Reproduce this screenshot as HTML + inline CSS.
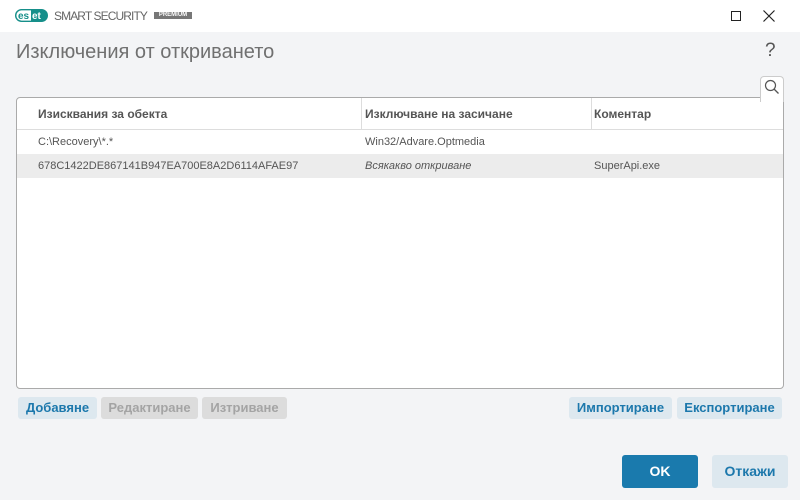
<!DOCTYPE html>
<html><head><meta charset="utf-8"><style>
*{margin:0;padding:0;box-sizing:border-box}
body{width:800px;height:500px;background:#f3f4f6;font-family:"Liberation Sans","DejaVu Sans",sans-serif;position:relative;overflow:hidden;color:#333}
.tb{position:absolute;left:0;top:0;width:800px;height:32px;background:#fff}
.abs{position:absolute}
.h1{left:16px;top:41px;font-size:20px;color:#707070;font-weight:normal;letter-spacing:0px}
.tbl{left:16px;top:97px;width:768px;height:292px;background:#fff;border:1px solid #aaa;border-radius:4px}
.hdr{position:absolute;top:0;left:0;right:0;height:32px;border-bottom:1px solid #ddd}
.hd{position:absolute;top:9px;font-size:12px;font-weight:bold;color:#555}
.vl{position:absolute;top:0;width:1px;height:31px;background:#ddd}
.cell{position:absolute;font-size:11px;color:#555}
.btn{position:absolute;height:22px;border-radius:3px;font-size:13px;font-weight:bold;text-align:center;line-height:22px}
.b1{background:#dde8ef;color:#1c78ac}
.b2{background:#dcdcdc;color:#a4a4a4}
</style></head><body>
<div class="tb"></div>
<svg class="abs" style="left:15px;top:9px" width="33" height="13" viewBox="0 0 33 13">
<rect x="0.7" y="0.7" width="31.6" height="11.6" rx="5.8" fill="#fff" stroke="#168f8a" stroke-width="1.4"/>
<path d="M16 0.7 H26.5 A5.8 5.8 0 0 1 26.5 12.3 H16 Z" fill="#168f8a"/>
<text x="3" y="10" font-size="10" font-weight="bold" fill="#168f8a" font-family="Liberation Sans">es</text>
<text x="17" y="10" font-size="10" font-weight="bold" fill="#fff" font-family="Liberation Sans">et</text>
</svg>
<div class="abs" style="left:54px;top:9px;font-size:12px;color:#666;letter-spacing:-0.9px">SMART SECURITY</div>
<div class="abs" style="left:154px;top:12px;width:38px;height:7px;background:#777;color:#fff;font-size:6px;line-height:7px;text-align:center;font-weight:bold">PREMIUM</div>
<svg class="abs" style="left:731px;top:11px" width="10" height="10"><rect x="0.5" y="0.5" width="9" height="9" fill="none" stroke="#222"/></svg>
<svg class="abs" style="left:763px;top:10px" width="12" height="12"><path d="M0.5 0.5L11.5 11.5M11.5 0.5L0.5 11.5" stroke="#222" stroke-width="1.2"/></svg>
<div class="abs h1">Изключения от откриването</div>
<div class="abs" style="left:765px;top:40px;font-size:19px;color:#555">?</div>
<div class="abs" style="left:760px;top:76px;width:24px;height:26px;background:#fff;border:1px solid #ccc;border-bottom:none;border-radius:4px 4px 0 0;z-index:2"></div>
<svg class="abs" style="left:764px;top:79px;z-index:3" width="16" height="16"><circle cx="6.5" cy="6.5" r="5" fill="none" stroke="#555" stroke-width="1.2"/><path d="M10 10L14.5 14.5" stroke="#555" stroke-width="1.3"/></svg>
<div class="abs tbl">
<div class="hdr">
<div class="hd" style="left:21px">Изисквания за обекта</div>
<div class="vl" style="left:344px"></div>
<div class="hd" style="left:348px">Изключване на засичане</div>
<div class="vl" style="left:574px"></div>
<div class="hd" style="left:577px">Коментар</div>
</div>
<div class="cell" style="left:21px;top:38px">C:\Recovery\*.*</div>
<div class="cell" style="left:348px;top:38px">Win32/Advare.Optmedia</div>
<div class="abs" style="left:0;top:56px;width:766px;height:24px;background:#ececec"></div>
<div class="cell" style="left:21px;top:62px">678C1422DE867141B947EA700E8A2D6114AFAE97</div>
<div class="cell" style="left:348px;top:62px;font-style:italic">Всякакво откриване</div>
<div class="cell" style="left:577px;top:62px">SuperApi.exe</div>
</div>
<div class="btn b1" style="left:18px;top:397px;width:79px">Добавяне</div>
<div class="btn b2" style="left:101px;top:397px;width:97px">Редактиране</div>
<div class="btn b2" style="left:202px;top:397px;width:85px">Изтриване</div>
<div class="btn b1" style="left:569px;top:397px;width:103px">Импортиране</div>
<div class="btn b1" style="left:677px;top:397px;width:105px">Експортиране</div>
<div class="btn" style="left:622px;top:455px;width:76px;height:33px;line-height:33px;background:#1a7aad;color:#fff;font-size:14px">OK</div>
<div class="btn b1" style="left:712px;top:455px;width:76px;height:33px;line-height:33px;font-size:14px">Откажи</div>
</body></html>
